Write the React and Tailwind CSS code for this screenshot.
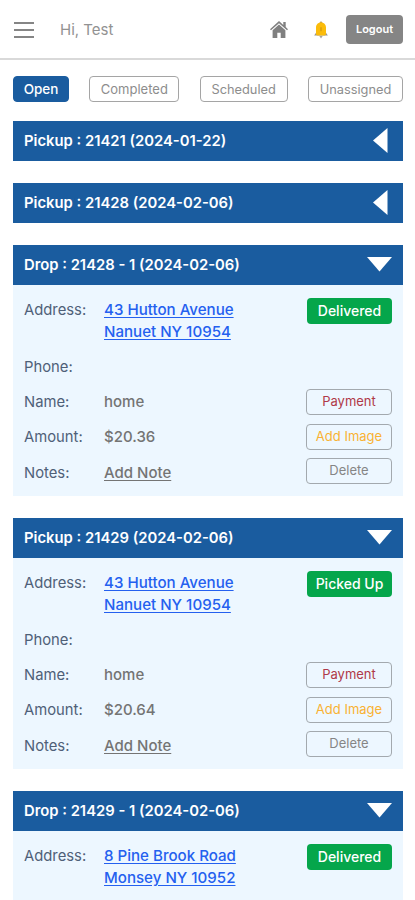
import React from 'react';

const tabs = [
  { label: 'Open', className: 'w-14 border-[#1a5c9f] bg-[#1a5c9f] font-medium text-white text-[13.5px]' },
  { label: 'Completed', className: 'w-[90px] border-[#a5a5a5] pt-px text-[#8d8d8d] text-[13px]' },
  { label: 'Scheduled', className: 'w-[88px] border-[#a5a5a5] pt-px text-[#8d8d8d] text-[12.8px]' },
  { label: 'Unassigned', className: 'w-[95px] border-[#a5a5a5] pt-px text-[#8d8d8d] text-[12.8px]' },
];

const stops = [
  { title: 'Pickup : 21421 (2024-01-22)' },
  { title: 'Pickup : 21428 (2024-02-06)' },
  {
    title: 'Drop : 21428 - 1 (2024-02-06)',
    street: '43 Hutton Avenue',
    city: 'Nanuet NY 10954',
    name: 'home',
    amount: '$20.36',
    status: 'Delivered',
  },
  {
    title: 'Pickup : 21429 (2024-02-06)',
    street: '43 Hutton Avenue',
    city: 'Nanuet NY 10954',
    name: 'home',
    amount: '$20.64',
    status: 'Picked Up',
  },
  {
    title: 'Drop : 21429 - 1 (2024-02-06)',
    street: '8 Pine Brook Road',
    city: 'Monsey NY 10952',
    status: 'Delivered',
  },
];

function HomeIcon() {
  return (
    <svg width="18" height="17" viewBox="0 0 18 17" fill="#808080">
      <path d="M9 0 0 8.2l1 1.1L9 2.2l8 7.1 1-1.1-2.3-2.1V1h-2.4v2.9z" />
      <path d="M9 3.5 2.6 9.2V17h4.7v-5.2h3.4V17h4.7V9.2z" />
    </svg>
  );
}

function BellIcon() {
  return (
    <svg width="14" height="18" viewBox="0 0 14 18">
      <circle cx="7" cy="1.7" r="1.3" fill="#b99a63" />
      <path d="M5.3 15h3.4L7 17.5z" fill="#a9a39a" />
      <path d="M.2 14.6 2 11.8h10l1.8 2.8z" fill="#98938b" />
      <path d="M7 1.4c-3.2 0-5 2.1-5 5.2v6.2c0 1 .6 1.7 1.6 1.7h6.8c1 0 1.6-.7 1.6-1.7V6.6c0-3.1-1.8-5.2-5-5.2z" fill="#fbbc0b" />
      <path d="M7 6.3v4" stroke="#d29a13" strokeWidth="1.3" />
    </svg>
  );
}

function Arrow({ open }) {
  if (open) {
    return (
      <svg width="25" height="15" viewBox="0 0 25 15" fill="#fff" className="mr-[11px] mt-[-2px]">
        <path d="M0 0h25L12.5 14.5z" />
      </svg>
    );
  }
  return (
    <svg width="15" height="25" viewBox="0 0 15 25" fill="#fff" className="mr-[15px] mt-[-2px]">
      <path d="M14.5 0v25L0 12.5z" />
    </svg>
  );
}

function Row({ label, children }) {
  return (
    <div className="flex">
      <span className="w-20 shrink-0 text-[14.8px] text-[#4f6078]">{label}</span>
      <span className="font-medium text-[#747474]">{children}</span>
    </div>
  );
}

function StopCard({ stop }) {
  const open = Boolean(stop.status);
  return (
    <section className="w-[390px]">
      <div className="flex h-10 items-center justify-between bg-[#1a5c9f] pl-[11px]">
        <h2 className="pt-px text-[14.8px] font-semibold text-white">{stop.title}</h2>
        <Arrow open={open} />
      </div>
      {open && (
        <div className="flex h-[211px] justify-between bg-[#edf7ff] pl-[11px] pr-[11px]">
          <div className="flex flex-col gap-[13px] pt-[14px] text-[15px] leading-[22px]">
            <Row label="Address:">
              <a href="#" className="block text-[15.1px] text-[#2460ef] underline underline-offset-2">
                {stop.street}
                <br />
                {stop.city}
              </a>
            </Row>
            {stop.name && (
              <>
                <Row label="Phone:" />
                <Row label="Name:">{stop.name}</Row>
                <Row label="Amount:">{stop.amount}</Row>
                <div className="pt-px">
                  <Row label="Notes:">
                    <a href="#" className="underline underline-offset-2">Add Note</a>
                  </Row>
                </div>
              </>
            )}
          </div>
          <div className="flex w-[86px] flex-col pt-[13px] text-[13px]">
            <button className="ml-px h-[26px] rounded bg-[#05a64b] text-sm font-medium text-white">{stop.status}</button>
            {stop.name && (
              <>
                <button className="mt-[65px] h-[26px] rounded border border-[#a3a9ae] text-[#b03a48]">Payment</button>
                <button className="mt-[9px] h-[26px] rounded border border-[#a3a9ae] text-[#f9b233]">Add Image</button>
                <button className="mt-2 h-[26px] rounded border border-[#a3a9ae] text-[#858585]">Delete</button>
              </>
            )}
          </div>
        </div>
      )}
    </section>
  );
}

export default function App() {
  return (
    <div className="h-[900px] w-[415px] overflow-hidden bg-white font-['Inter',sans-serif]">
      <header className="flex h-[60px] items-center border-b-2 border-[#d9d9d9] pl-[14px] pr-3 pt-px">
        <div className="flex w-5 flex-col gap-[5px]">
          <span className="h-[2px] bg-[#858585]" />
          <span className="h-[2px] bg-[#858585]" />
          <span className="h-[2px] bg-[#858585]" />
        </div>
        <span className="ml-[26px] pt-px text-[15px] text-[#929292]">Hi, Test</span>
        <div className="ml-auto flex items-center">
          <HomeIcon />
          <span className="ml-[26px] mr-[18px]">
            <BellIcon />
          </span>
          <button className="h-[29px] w-[57px] rounded bg-[#858585] text-[11px] font-semibold text-white">Logout</button>
        </div>
      </header>
      <nav className="flex justify-between pl-[13px] pr-3 pt-4">
        {tabs.map((tab) => (
          <button key={tab.label} className={`h-[26px] rounded border ${tab.className}`}>
            {tab.label}
          </button>
        ))}
      </nav>
      <main className="flex flex-col gap-[22px] pl-[13px] pt-[19px]">
        {stops.map((stop) => (
          <StopCard key={stop.title} stop={stop} />
        ))}
      </main>
    </div>
  );
}
